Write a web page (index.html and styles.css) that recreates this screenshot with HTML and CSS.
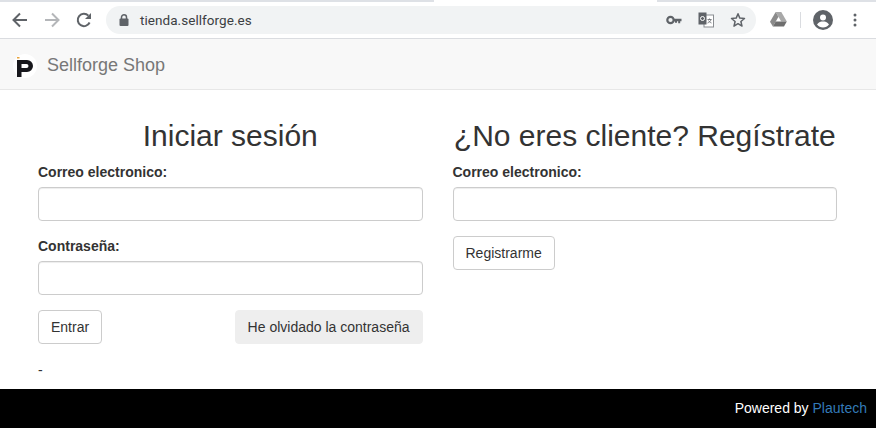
FILE: index.html
```html
<!DOCTYPE html>
<html lang="es">
<head>
<meta charset="utf-8">
<title>Sellforge Shop</title>
<link rel="stylesheet" href="styles.css">
</head>
<body>
<div class="tabstrip"><div class="tab"></div><div class="tab-gap"></div><div class="tab"></div></div>
<div class="toolbar">
  <svg class="nav" width="18" height="18" viewBox="0 0 18 18"><path d="M16 9H3M9 2.500L2.500 9 9 15.500" fill="none" stroke="#5f6368" stroke-width="2"/></svg>
  <svg class="nav" width="18" height="18" viewBox="0 0 18 18"><path d="M2 9h13M9 2.500L15.500 9 9 15.500" fill="none" stroke="#b4b6b9" stroke-width="2"/></svg>
  <svg class="nav" width="18" height="18" viewBox="0 0 18 18"><path d="M14.600 11.500A6.200 6.200 0 1 1 13.400 4.600" fill="none" stroke="#5f6368" stroke-width="2"/><path d="M16 2v6h-6z" fill="#5f6368"/></svg>
  <div class="omnibox">
    <svg width="12" height="14" viewBox="0 0 12 14"><path d="M3.500 6V4.200a2.500 2.500 0 0 1 5 0V6" fill="none" stroke="#5f6368" stroke-width="1.500"/><rect x="1.500" y="5.500" width="9" height="7.500" rx="1" fill="#5f6368"/></svg>
    <span class="url">tienda.sellforge.es</span>
    <div class="omni-icons">
      <svg width="16" height="10" viewBox="0 0 16 10"><circle cx="4.500" cy="5" r="3.200" fill="none" stroke="#5f6368" stroke-width="2.200"/><path d="M7 3.800h8.500v2.400h-1.300v2h-2v-2h-1.200v1.500H9V6.200H7z" fill="#5f6368"/></svg>
      <svg width="16" height="16" viewBox="0 0 16 16"><rect x="6" y="3" width="9.500" height="12" fill="#fff" stroke="#8a8d91"/><rect x="0.500" y="0.500" width="8" height="12" fill="#5f6368"/><circle cx="4.500" cy="6.500" r="2" fill="none" stroke="#fff"/><path d="M9.500 7.500h4M11.500 6.500v1M13 7.500c-.5 2-2 3-3.500 3.500M10.500 8.500c.5 1 1.500 2 3 2.500" fill="none" stroke="#5f6368" stroke-width=".8"/></svg>
      <svg width="16" height="16" viewBox="0 0 16 16"><path d="M8 1.800l1.800 4.300 4.700.4-3.600 3 1.100 4.600L8 11.700l-4 2.400 1.100-4.600-3.600-3 4.700-.4z" fill="none" stroke="#5f6368" stroke-width="1.500" stroke-linejoin="round"/></svg>
    </div>
  </div>
  <svg class="drive" width="17" height="15" viewBox="0 0 17 15"><path d="M5.700 0h5.600l5.500 9.500h-5.600z" fill="#a8a8a8"/><path d="M5.700 0l2.800 4.800L2.900 14.500 0 9.700z" fill="#8b8b8b"/><path d="M2.900 14.500l2.800-5h11.100l-2.800 5z" fill="#6e6e6e"/></svg>
  <span class="sep"></span>
  <svg class="avatar" width="20" height="20" viewBox="0 0 20 20"><circle cx="10" cy="10" r="10" fill="#5f6368"/><circle cx="10" cy="7.500" r="3" fill="#fff"/><path d="M4 14.500c1.500-2.500 4-3 6-3s4.500.5 6 3a7.500 7.500 0 0 1-12 0z" fill="#fff"/></svg>
  <svg class="dots" width="4" height="14" viewBox="0 0 4 14"><circle cx="2" cy="2" r="1.500" fill="#5f6368"/><circle cx="2" cy="7" r="1.500" fill="#5f6368"/><circle cx="2" cy="12" r="1.500" fill="#5f6368"/></svg>
</div>
<nav class="navbar">
  <span class="logo">
    <svg width="24" height="24" viewBox="0 0 24 24"><circle cx="12" cy="12" r="12" fill="#fff"/><path d="M4 6h10a6 6 0 0 1 0 12H8.500v5H4z M8.500 10v4H13.500a2 2 0 0 0 0-4z" fill="#17171c" fill-rule="evenodd"/><rect x="4" y="3" width="2.500" height="1.500" fill="#e8a33d"/></svg>
  </span>
  <span class="brand">Sellforge Shop</span>
</nav>
<main class="content">
  <section class="col">
    <h2>Iniciar sesión</h2>
    <label class="label">Correo electronico:</label>
    <input class="input" type="text">
    <label class="label">Contraseña:</label>
    <input class="input" type="password">
    <div class="actions">
      <button class="btn">Entrar</button>
      <button class="btn btn-light">He olvidado la contraseña</button>
    </div>
    <p class="dash">-</p>
  </section>
  <section class="col">
    <h2>¿No eres cliente? Regístrate</h2>
    <label class="label">Correo electronico:</label>
    <input class="input" type="text">
    <div class="actions">
      <button class="btn">Registrarme</button>
    </div>
  </section>
</main>
<footer class="footer">Powered by&nbsp;<a class="link">Plautech</a></footer>
</body>
</html>
```
FILE: styles.css
```css
* { box-sizing: border-box; }
html, body { margin: 0; height: 428px; overflow: hidden; }
body { background: #fff; font-family: "Liberation Sans", Arial, sans-serif; color: #333; display: flex; flex-direction: column; }
.tabstrip { height: 2px; background: #fff; display: flex; flex: none; }
.tab { flex: 1; height: 2px; background: #dee1e6; }
.tab-gap { width: 223px; flex: none; }
.tab:first-child { flex: none; width: 434px; }
.toolbar { height: 37px; flex: none; background: #fff; border-bottom: 1px solid #dadce0; display: flex; align-items: center; padding-left: 11px; padding-bottom: 1px; }
.nav { margin-right: 14px; flex: none; }
.omnibox { width: 650px; height: 28px; margin-left: -1px; background: #f1f3f4; border-radius: 14px; display: flex; align-items: center; padding-left: 12px; flex: none; }
.url { margin-left: 10px; font-family: Roboto, "Open Sans", sans-serif; font-size: 13.500px; color: #3c4043; letter-spacing: .05px; }
.omni-icons { margin-left: auto; display: flex; align-items: center; gap: 16px; padding-right: 10px; }
.drive { margin-left: 14px; flex: none; }
.sep { width: 1px; height: 16px; background: #dadce0; margin-left: 13px; flex: none; }
.avatar { margin-left: 12px; flex: none; }
.dots { margin-left: 20px; flex: none; }
.navbar { height: 51px; flex: none; background: #f8f8f8; border-bottom: 1px solid #e7e7e7; display: flex; align-items: center; padding-left: 13px; }
.logo { width: 24px; height: 24px; display: block; margin-top: 4px; }
.brand { margin-left: 10px; font-size: 18px; color: #777; margin-top: 2px; }
.content { flex: 1; display: flex; gap: 30px; padding: 0 39px 0 38px; min-height: 0; }
.col { width: 385px; display: flex; flex-direction: column; }
.col h2 { margin: 29px 0 10px; font-size: 30px; font-weight: 400; line-height: 33px; text-align: center; color: #333; }
.label { display: block; font-size: 14px; font-weight: 700; line-height: 20px; margin-bottom: 5px; }
.input { display: block; width: 100%; height: 34px; border: 1px solid #ccc; border-radius: 4px; background: #fff; box-shadow: inset 0 1px 1px rgba(0,0,0,.075); margin-bottom: 15px; padding: 6px 12px; }
.actions { display: flex; justify-content: space-between; }
.btn { height: 34px; padding: 6px 12px; font: 14px/20px "Liberation Sans", Arial, sans-serif; color: #333; background: #fff; border: 1px solid #ccc; border-radius: 4px; }
.btn-light { background: #eee; border-color: #eee; }
.dash { margin: 16px 0 0; font-size: 14px; line-height: 20px; color: #333; }
.footer { height: 39px; flex: none; background: #000; color: #fff; font-size: 14px; display: flex; align-items: center; justify-content: flex-end; padding-right: 9px; padding-bottom: 1px; }
.link { color: #337ab7; }
```
